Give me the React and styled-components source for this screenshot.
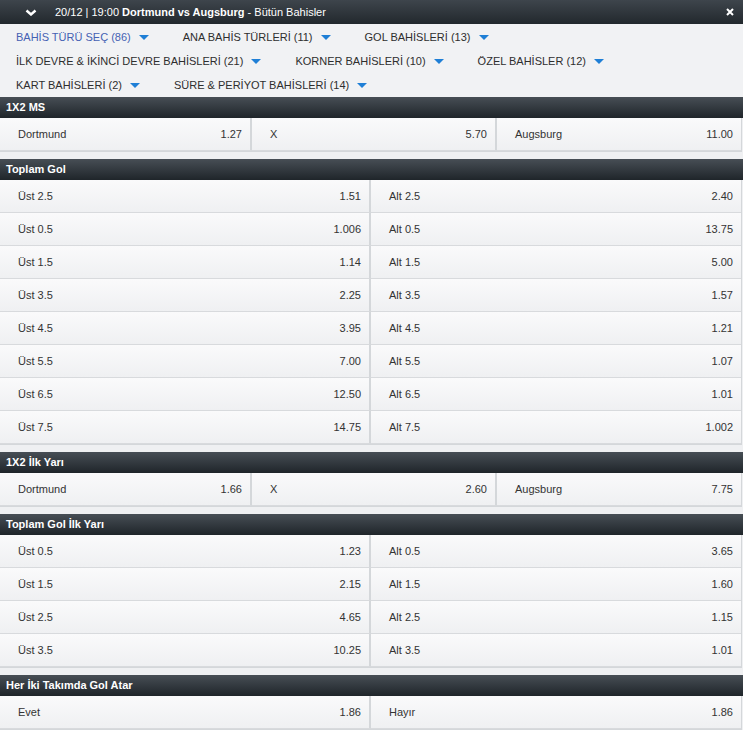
import React from 'react';
import styled, { createGlobalStyle } from 'styled-components';

const GlobalStyle = createGlobalStyle`
    html, body {
        margin: 0;
        padding: 0;
        background: #eff0f2;
    }
    body {
        font-family: "Liberation Sans", Arial, sans-serif;
        font-size: 11px;
        color: #333;
    }
`;

const filterList = [
    { id: 1, name: 'BAHİS TÜRÜ SEÇ (86)', active: true },
    { id: 2, name: 'ANA BAHİS TÜRLERİ (11)' },
    { id: 3, name: 'GOL BAHİSLERİ (13)' },
    { id: 4, name: 'İLK DEVRE & İKİNCİ DEVRE BAHİSLERİ (21)' },
    { id: 5, name: 'KORNER BAHİSLERİ (10)' },
    { id: 6, name: 'ÖZEL BAHİSLER (12)' },
    { id: 7, name: 'KART BAHİSLERİ (2)' },
    { id: 8, name: 'SÜRE & PERİYOT BAHİSLERİ (14)' },
];

const marketList = [
    {
        id: 1,
        title: '1X2 MS',
        cols: 3,
        cells: [['Dortmund', '1.27'], ['X', '5.70'], ['Augsburg', '11.00']],
    },
    {
        id: 2,
        title: 'Toplam Gol',
        cols: 2,
        cells: [
            ['Üst 2.5', '1.51'], ['Alt 2.5', '2.40'],
            ['Üst 0.5', '1.006'], ['Alt 0.5', '13.75'],
            ['Üst 1.5', '1.14'], ['Alt 1.5', '5.00'],
            ['Üst 3.5', '2.25'], ['Alt 3.5', '1.57'],
            ['Üst 4.5', '3.95'], ['Alt 4.5', '1.21'],
            ['Üst 5.5', '7.00'], ['Alt 5.5', '1.07'],
            ['Üst 6.5', '12.50'], ['Alt 6.5', '1.01'],
            ['Üst 7.5', '14.75'], ['Alt 7.5', '1.002'],
        ],
    },
    {
        id: 3,
        title: '1X2 İlk Yarı',
        cols: 3,
        cells: [['Dortmund', '1.66'], ['X', '2.60'], ['Augsburg', '7.75']],
    },
    {
        id: 4,
        title: 'Toplam Gol İlk Yarı',
        cols: 2,
        cells: [
            ['Üst 0.5', '1.23'], ['Alt 0.5', '3.65'],
            ['Üst 1.5', '2.15'], ['Alt 1.5', '1.60'],
            ['Üst 2.5', '4.65'], ['Alt 2.5', '1.15'],
            ['Üst 3.5', '10.25'], ['Alt 3.5', '1.01'],
        ],
    },
    {
        id: 5,
        title: 'Her İki Takımda Gol Atar',
        cols: 2,
        cells: [['Evet', '1.86'], ['Hayır', '1.86']],
    },
];

const App = () => {
    return (
        <>
            <GlobalStyle />
            <Page>
                <TopBar>
                    <Chevron viewBox="0 0 12 7" width="12" height="7">
                        <polyline points="1.5,1.5 6,5.5 10.5,1.5" fill="none" stroke="#fff" strokeWidth="2.4" />
                    </Chevron>
                    <MatchTitle>
                        20/12 | 19:00 <b>Dortmund vs Augsburg</b> - Bütün Bahisler
                    </MatchTitle>
                    <CloseIcon viewBox="0 0 8 8" width="8" height="8">
                        <path d="M1 1 L7 7 M7 1 L1 7" stroke="#fff" strokeWidth="2" />
                    </CloseIcon>
                </TopBar>

                <FilterBar>
                    {filterList.map(item => (
                        <FilterItem key={item.id} $active={item.active}>
                            {item.name}
                            <Caret />
                        </FilterItem>
                    ))}
                </FilterBar>

                {marketList.map(market => (
                    <Market key={market.id}>
                        <MarketTitle>{market.title}</MarketTitle>
                        <OddsGrid $cols={market.cols}>
                            {market.cells.map(([label, odd], idx) => (
                                <OddCell key={idx} $last={(idx + 1) % market.cols === 0}>
                                    <span>{label}</span>
                                    <span>{odd}</span>
                                </OddCell>
                            ))}
                        </OddsGrid>
                    </Market>
                ))}
            </Page>
        </>
    );
};

export default App;

const Page = styled.div`
    width: 743px;
`;

const TopBar = styled.div`
    display: flex;
    align-items: center;
    height: 24px;
    background: linear-gradient(#3e454c, #22282d);
    color: #fff;
    font-size: 11px;
`;

const Chevron = styled.svg`
    margin-left: 25px;
    margin-right: 18px;
    display: block;
`;

const MatchTitle = styled.div`
    flex: 1;
    white-space: nowrap;

    b {
        font-weight: 700;
    }
`;

const CloseIcon = styled.svg`
    display: block;
    margin-right: 9px;
`;

const FilterBar = styled.div`
    display: flex;
    flex-wrap: wrap;
    padding: 1px 0 0 16px;
    height: 72px;
    background: #f1f2f4;
`;

const FilterItem = styled.div`
    display: flex;
    align-items: center;
    height: 24px;
    margin-right: 34px;
    font-size: 11px;
    white-space: nowrap;
    color: ${props => (props.$active ? '#4561b3' : '#2e2e2e')};
`;

const Caret = styled.span`
    width: 0;
    height: 0;
    margin-left: 8px;
    margin-top: 1px;
    border-left: 5px solid transparent;
    border-right: 5px solid transparent;
    border-top: 5px solid #1f7fd6;
`;

const Market = styled.section`
    margin-bottom: 7px;
`;

const MarketTitle = styled.h3`
    margin: 0;
    height: 21px;
    line-height: 21px;
    padding-left: 6px;
    font-size: 11px;
    font-weight: 700;
    color: #fff;
    background: linear-gradient(#474e55, #1f252a);
`;

const OddsGrid = styled.div`
    display: grid;
    grid-template-columns: ${props => (props.$cols === 3 ? '252px 245px 1fr' : '371px 1fr')};
    margin-right: 1px;
    border-right: 1px solid #d4d7da;
    border-bottom: 1px solid #d4d7da;
`;

const OddCell = styled.div`
    display: flex;
    justify-content: space-between;
    align-items: center;
    height: 32px;
    padding: 0 8px 0 18px;
    background: linear-gradient(#fafafb, #eff0f2);
    border-bottom: 1px solid #d8dadd;
    border-right: ${props => (props.$last ? 'none' : '2px solid #d4d7da')};
    font-size: 11px;
    color: #333;
`;
